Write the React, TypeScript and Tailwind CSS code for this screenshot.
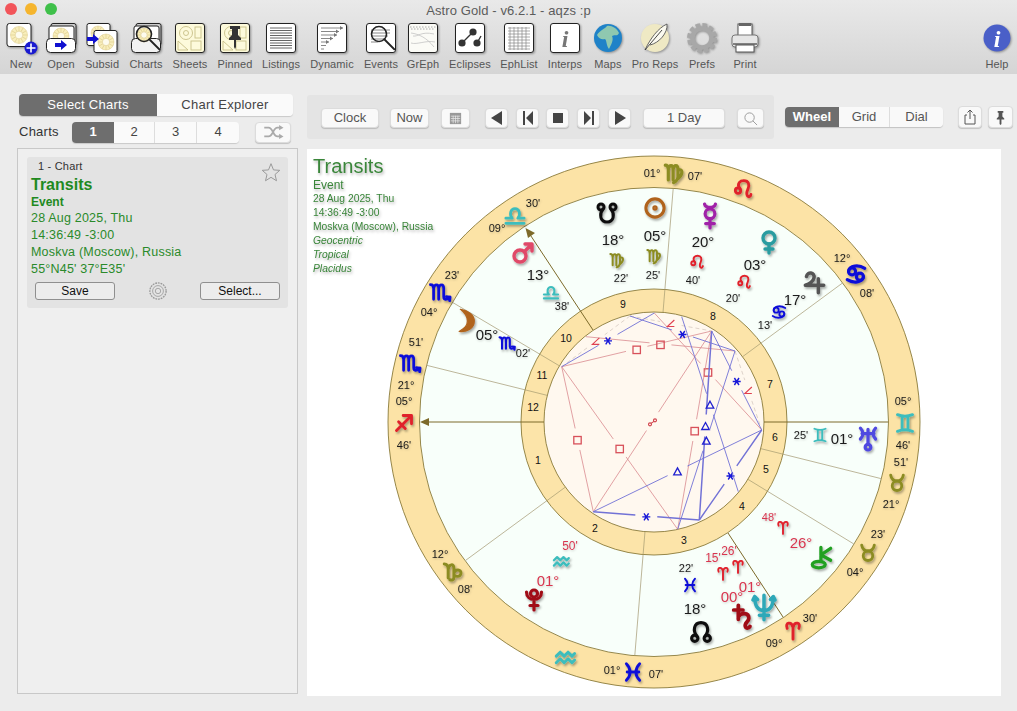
import { ReactNode } from 'react';

const CX = 654;
const CY = 422;

const C = {
  red: '#e0202c',
  rose: '#d8364f',
  blue: '#1010d8',
  teal: '#3dbdbd',
  olive: '#8c8c22',
  black: '#111111',
  brown: '#b0641e',
  line: '#8a7a3a',
};

// astro symbols, drawn in a 24x24 box
const GLYPHS: Record<string, ReactNode> = {
  aries: <path d="M5 10C2 3 10 1 12 9V23M12 9C14 1 22 3 19 10" />,
  taurus: (
    <>
      <circle cx="12" cy="15.5" r="6" />
      <path d="M4 2C5 8 9 9.5 12 9.5C15 9.5 19 8 20 2" />
    </>
  ),
  gemini: <path d="M3 2C9 4.5 15 4.5 21 2M3 22C9 19.5 15 19.5 21 22M8.5 4.5V19.5M15.5 4.5V19.5" />,
  cancer: (
    <>
      <circle cx="7.5" cy="9" r="4" />
      <circle cx="16.5" cy="15" r="4" />
      <path d="M3.5 9C4.5 2 15 1 22 5.5M20.5 15C19.5 22 9 23 2 18.5" />
    </>
  ),
  leo: (
    <>
      <circle cx="6" cy="14" r="3.2" />
      <path d="M8 11.5C4 5 9 2 13 2C19 2 20 7 18 12C16.5 15 15.5 18 17.5 20.5C19 22 21 21 21.5 18.5" />
    </>
  ),
  virgo: <path d="M2 3C4 3 5.5 5 5.5 8V20M5.5 8C6.5 2 11 2 11 8V20M11 8C12 2 16.5 2 16.5 8V16C16.5 19 14 22 11.5 23M16.5 9C22 6 23 13 16.5 18.5" />,
  libra: <path d="M2 21H22M2 15.5H9C5.5 12 7 5 12 5C17 5 18.5 12 15 15.5H22" />,
  scorpio: <path d="M1.5 4C3.5 4 5 5.5 5 8V20M5 8C6 3 10.5 3 10.5 8V20M10.5 8C11.5 3 16 3 16 8V17C16 20.5 19 21.5 23 17.5M23 17.5L19 17M23 17.5L22.5 21.5" />,
  sagittarius: <path d="M3 21L21 3M11 3H21V13M5.5 10.5L13.5 18.5" />,
  capricorn: <path d="M2 4C5 4 6.5 6.5 6.5 10V20M6.5 10C7.5 4 13 3 13 9V19C13 22 11 23 8.5 22M13 15C14 9 22 10 21 15C20 19 15 19 13 16" />,
  aquarius: <path d="M2 11L6.5 6.5L11 11L15.5 6.5L20 11L23 8M2 18.5L6.5 14L11 18.5L15.5 14L20 18.5L23 15.5" />,
  pisces: <path d="M4 2C10 8 10 16 4 22M20 2C14 8 14 16 20 22M5 12H19" />,
  sun: (
    <>
      <circle cx="12" cy="12" r="9.5" />
      <circle cx="12" cy="12" r="1.2" />
    </>
  ),
  moon: <path d="M8 2C15 3 20 7 20 12C20 18 14 22 7 21C12 18 14 16 14 12C14 8 12 5 8 2Z" fill="currentColor" strokeWidth="1" />,
  mercury: (
    <>
      <circle cx="12" cy="10" r="4.5" />
      <path d="M12 14.5V23M8 19H16M7 1C8 5 16 5 17 1" />
    </>
  ),
  venus: (
    <>
      <circle cx="12" cy="8" r="6" />
      <path d="M12 14V23M8 19H16" />
    </>
  ),
  mars: (
    <>
      <circle cx="9" cy="15" r="6" />
      <path d="M13.5 10.5L21 3M14 3H21V10" />
    </>
  ),
  jupiter: <path d="M5 7C6 2 13 3 12 8C11.5 11 8 14 4 15H21M16 9V22" />,
  saturn: <path d="M8 2V14M4 6H12M8 12C10 8 17 8 17 13C17 16 13 17 14 20C14.5 22 17 22 18 20" />,
  uranus: (
    <>
      <circle cx="12" cy="19.5" r="2.6" />
      <path d="M5 2C8 5 8 9 5 12M19 2C16 5 16 9 19 12M6.5 7H17.5M12 3V17" />
    </>
  ),
  neptune: <path d="M4 3C4 13 8 15 12 15C16 15 20 13 20 3M12 2V23M8 19H16M2.5 6L4 3L6.5 5.5M17.5 5.5L20 3L21.5 6" />,
  pluto: (
    <>
      <circle cx="12" cy="6.5" r="3.5" />
      <path d="M4.5 5C4.5 15 19.5 15 19.5 5M12 13V23M8 18.5H16" />
    </>
  ),
  chiron: (
    <>
      <ellipse cx="9" cy="19" rx="6" ry="3" />
      <path d="M11 16V3M11 10L20 4M11 10L20 15" />
    </>
  ),
  nnode: (
    <>
      <circle cx="6" cy="18" r="3" />
      <circle cx="18" cy="18" r="3" />
      <path d="M8 16C4 11 5 3 12 3C19 3 20 11 16 16" />
    </>
  ),
  snode: (
    <>
      <circle cx="6" cy="6" r="3" />
      <circle cx="18" cy="6" r="3" />
      <path d="M8 8C4 13 5 21 12 21C19 21 20 13 16 8" />
    </>
  ),
};

type Sym = [string, number, number, string, number, number?];

const SYMBOLS: Sym[] = [
  // signs on the outer ring
  ['libra', 515, 215, C.teal, 22, 3],
  ['scorpio', 440, 292, C.blue, 22, 3],
  ['scorpio', 410, 363, C.blue, 22, 3],
  ['sagittarius', 404, 423, C.red, 20, 3.4],
  ['capricorn', 453, 571, C.olive, 21, 3.4],
  ['aquarius', 565, 657, C.teal, 21, 3.4],
  ['pisces', 633, 672, C.blue, 20, 3.4],
  ['aries', 793, 630, C.red, 20, 3.4],
  ['taurus', 868, 553, C.olive, 19, 3.6],
  ['taurus', 897, 483, C.olive, 19, 3.6],
  ['gemini', 905, 423, C.teal, 20, 3.4],
  ['cancer', 856, 274, C.blue, 21, 3.6],
  ['leo', 743, 189, C.red, 20, 3.4],
  ['virgo', 674, 173, C.olive, 21, 3.6],
  // planets
  ['snode', 607, 213, C.black, 24, 3],
  ['sun', 655, 208, C.brown, 23, 3.2],
  ['mercury', 710, 216, '#a020a8', 26, 3],
  ['venus', 769, 242, '#2a9ca0', 24, 3.4],
  ['jupiter', 814, 282, '#555555', 26, 3.2],
  ['mars', 523, 253, '#e04868', 24, 3.4],
  ['moon', 465, 321, C.brown, 28],
  ['uranus', 868, 439, '#5048e0', 26, 3],
  ['chiron', 822, 557, '#20a020', 26, 3],
  ['neptune', 764, 607, '#2ea8b8', 28, 3],
  ['saturn', 743, 617, '#a00c18', 28, 3.2],
  ['nnode', 701, 632, C.black, 25, 3],
  ['pluto', 534, 599, '#a00c18', 24, 3.2],
  // small signs next to the planets
  ['virgo', 617, 260, C.olive, 16, 3],
  ['virgo', 654, 256, C.olive, 16, 3],
  ['leo', 697, 262, C.red, 15, 3],
  ['leo', 744, 282, C.red, 15, 3],
  ['cancer', 779, 312, C.blue, 15, 3],
  ['libra', 551, 292, C.teal, 17, 3],
  ['scorpio', 507, 343, C.blue, 17, 3],
  ['gemini', 820, 435, C.teal, 15, 3],
  ['aries', 783, 527, C.red, 15, 3],
  ['aries', 738, 566, C.red, 15, 3],
  ['aries', 723, 573, C.red, 15, 3],
  ['pisces', 690, 585, C.blue, 15, 3],
  ['aquarius', 561, 561, C.teal, 17, 3.2],
];

type Txt = [string, number, number, number?, string?];

const LABELS: Txt[] = [
  ['01°', 652, 173], ["07'", 695, 176], ["30'", 533, 203], ['09°', 497, 228],
  ["23'", 452, 275], ['04°', 429, 312], ["51'", 416, 342], ['21°', 406, 385],
  ['05°', 404, 401], ["46'", 404, 445], ['12°', 440, 554], ["08'", 465, 589],
  ['01°', 612, 670], ["07'", 656, 674], ['09°', 774, 643], ["30'", 810, 618],
  ['04°', 855, 572], ["23'", 878, 534], ['21°', 891, 504], ["51'", 901, 462],
  ["46'", 903, 445], ['05°', 903, 401], ['12°', 842, 258], ["08'", 867, 293],
  ['18°', 613, 239, 15], ["22'", 621, 278], ['05°', 655, 235, 15], ["25'", 653, 275],
  ['20°', 703, 241, 15], ["40'", 693, 280], ['03°', 755, 264, 15], ["20'", 733, 298],
  ['17°', 795, 299, 15], ["13'", 765, 325], ['13°', 538, 274, 15], ["38'", 562, 306],
  ['05°', 487, 334, 15], ["02'", 523, 353], ['01°', 842, 438, 15], ["25'", 801, 435],
  ['26°', 801, 542, 15, C.rose], ["48'", 769, 517, 11, C.rose],
  ['01°', 750, 586, 15, C.rose], ["26'", 729, 551, 12, C.rose],
  ['00°', 732, 596, 15, C.rose], ["15'", 713, 558, 12, C.rose],
  ['18°', 695, 608, 15], ["22'", 686, 568],
  ['01°', 548, 580, 15, C.rose], ["50'", 570, 546, 12, C.rose],
];

const HOUSES: [string, number, number][] = [
  ['9', 623, 304], ['8', 713, 316], ['7', 770, 384], ['6', 775, 437],
  ['5', 766, 469], ['4', 742, 506], ['3', 684, 540], ['2', 595, 528],
  ['1', 538, 460], ['12', 533, 407], ['11', 542, 375], ['10', 566, 338],
];

const CUSPS = [166, 149.3, 85.3, 36.4, -14, -31.4, -94.7, -143.7];

const P: Record<string, [number, number]> = {
  a: [561.7, 366.7], b: [630, 316], c: [654.3, 313], d: [711.7, 331], e: [735, 351],
  f: [761.7, 430], g: [738.3, 491.7], h: [699.3, 520], i: [677.7, 529.3], j: [593.3, 511.7],
  k: [586, 336.7], m: [681.7, 316.7],
};

const RED = '#d98a8f';
const BLUE = '#7272d6';

// from, to, kind, width
const ASPECTS: [string, string, string, number][] = [
  ['a', 'd', 'square', 0.8], ['k', 'e', 'square', 0.8], ['c', 'f', 'square', 0.8],
  ['d', 'i', 'square', 0.8], ['a', 'j', 'square', 0.8], ['a', 'i', 'square', 0.8],
  ['d', 'j', 'opp', 0.8], ['b', 'a', 'semi', 0.6], ['b', 'd', 'semi', 0.6], ['e', 'f', 'semi', 0.6],
  ['c', 'a', 'sextile', 0.9], ['b', 'e', 'sextile', 0.9], ['d', 'f', 'sextile', 0.9],
  ['f', 'h', 'sextile', 1.4], ['j', 'h', 'sextile', 1.4], ['j', 'f', 'trine', 0.9],
  ['h', 'd', 'trine', 1.5], ['i', 'e', 'trine', 0.9], ['m', 'g', 'trine', 0.9],
];

function Glyph({ name, x, y, color, size, sw = 3 }: { name: string; x: number; y: number; color: string; size: number; sw?: number }) {
  const s = size / 24;
  return (
    <g
      transform={`translate(${x - size / 2} ${y - size / 2}) scale(${s})`}
      fill="none"
      stroke={color}
      color={color}
      strokeWidth={sw}
      strokeLinecap="round"
      strokeLinejoin="round"
    >
      {GLYPHS[name]}
    </g>
  );
}

function pt(angle: number, r: number) {
  const t = (angle * Math.PI) / 180;
  return [CX + r * Math.cos(t), CY - r * Math.sin(t)];
}

function AspectMark({ kind, x, y }: { kind: string; x: number; y: number }) {
  if (kind === 'opp') {
    return (
      <g fill="none" stroke="#d0404a" strokeWidth="1.1">
        <circle cx={x - 2.5} cy={y + 2} r="1.5" />
        <circle cx={x + 2.5} cy={y - 2} r="1.5" />
        <path d={`M${x - 1.5} ${y + 1}L${x + 1.5} ${y - 1}`} />
      </g>
    );
  }
  if (kind === 'square') {
    return <rect x={x - 3.7} y={y - 3.7} width="7.4" height="7.4" fill="none" stroke="#d8505a" strokeWidth="1.3" />;
  }
  if (kind === 'semi') {
    return <path d={`M${x + 3.5} ${y - 4.5}L${x - 3.5} ${y + 2}H${x + 3.5}`} fill="none" stroke="#e04050" strokeWidth="1.1" />;
  }
  if (kind === 'trine') {
    return <path d={`M${x} ${y - 4}L${x + 3.8} ${y + 3}H${x - 3.8}Z`} fill="none" stroke="#2020d0" strokeWidth="1.3" />;
  }
  return (
    <path
      d={`M${x - 4} ${y}H${x + 4}M${x - 2.3} ${y - 3.5}L${x + 2.3} ${y + 3.5}M${x + 2.3} ${y - 3.5}L${x - 2.3} ${y + 3.5}`}
      stroke="#1818d8"
      strokeWidth="1.4"
    />
  );
}

function Wheel() {
  return (
    <svg viewBox="307 149 694 547" className="block h-[547px] w-[694px]">
      <defs>
        <filter id="sh" x="-30%" y="-30%" width="170%" height="170%">
          <feDropShadow dx="1.2" dy="1.8" stdDeviation="1.1" floodColor="#000" floodOpacity="0.35" />
        </filter>
        <filter id="tsh" x="-30%" y="-30%" width="170%" height="170%">
          <feDropShadow dx="0.6" dy="1" stdDeviation="0.8" floodColor="#000" floodOpacity="0.2" />
        </filter>
      </defs>

      <circle cx={CX} cy={CY} r="266" fill="#fce3a6" stroke={C.line} strokeWidth="0.9" />
      <circle cx={CX} cy={CY} r="234.5" fill="#f8fffa" stroke={C.line} strokeWidth="0.9" />
      {CUSPS.map((a) => {
        const [x1, y1] = pt(a, 110);
        const [x2, y2] = pt(a, 234);
        return <line key={a} x1={x1} y1={y1} x2={x2} y2={y2} stroke="#b5ae8e" strokeWidth="0.9" />;
      })}
      <circle cx={CX} cy={CY} r="133" fill="#fce3a6" fillOpacity="0.96" stroke={C.line} strokeWidth="0.9" />
      {CUSPS.map((a) => {
        const [x1, y1] = pt(a, 110);
        const [x2, y2] = pt(a, 133);
        return <line key={a} x1={x1} y1={y1} x2={x2} y2={y2} stroke="#b0a478" strokeWidth="0.8" />;
      })}
      <circle cx={CX} cy={CY} r="110" fill="#fff8ef" stroke={C.line} strokeWidth="0.9" />

      {/* asc / mc axes */}
      <path d="M428 422H544M764 422H888M527 230L593 330M728 533L783 617" stroke="#7d6a2a" strokeWidth="1" fill="none" />
      <path d="M420 422L429 418V426Z" fill="#7d6a2a" />
      <path d="M525.5 228L535 233L528 238Z" fill="#7d6a2a" />

      {ASPECTS.map(([from, to, kind, w], n) => {
        const [x1, y1] = P[from];
        const [x2, y2] = P[to];
        const mx = (x1 + x2) / 2;
        const my = (y1 + y2) / 2;
        const len = Math.hypot(x2 - x1, y2 - y1);
        const ux = (x2 - x1) / len;
        const uy = (y2 - y1) / len;
        const red = kind === 'square' || kind === 'opp' || kind === 'semi';
        const gap = 11;
        const stroke = kind === 'semi' ? '#c8b8b0' : red ? RED : BLUE;
        return (
          <g key={n}>
            <path
              d={`M${x1} ${y1}L${mx - ux * gap} ${my - uy * gap}M${mx + ux * gap} ${my + uy * gap}L${x2} ${y2}`}
              stroke={stroke}
              strokeWidth={w}
              strokeDasharray={kind === 'semi' ? '4 3' : undefined}
              fill="none"
            />
            <AspectMark kind={kind} x={mx} y={my + 1} />
          </g>
        );
      })}

      <g fontFamily="'Liberation Sans', sans-serif" textAnchor="middle" dominantBaseline="central">
        {HOUSES.map(([t, x, y]) => (
          <text key={t} x={x} y={y} fontSize="10.5" fill="#111">
            {t}
          </text>
        ))}
        <g filter="url(#tsh)">
          {LABELS.map(([t, x, y, size = 11, color = '#1a1a1a'], n) => (
            <text key={n} x={x} y={y} fontSize={size} fill={color}>
              {t}
            </text>
          ))}
        </g>
      </g>

      <g filter="url(#sh)">
        {SYMBOLS.map(([name, x, y, color, size, sw], n) => (
          <Glyph key={n} name={name} x={x} y={y} color={color} size={size} sw={sw} />
        ))}
      </g>
    </svg>
  );
}

const TILE = { fill: '#ffffff', stroke: '#222', strokeWidth: 1 };

function Tile({ fill = '#ffffff' }: { fill?: string }) {
  return <rect x="2.5" y="2.5" width="29" height="29" rx="2.5" {...TILE} fill={fill} />;
}

function MiniWheel({ x, y, r }: { x: number; y: number; r: number }) {
  return (
    <g>
      <circle cx={x} cy={y} r={r} fill="#f8eebb" stroke="#dccb8c" strokeWidth="0.5" />
      <circle cx={x} cy={y} r={r * 0.45} fill="#fdfbee" stroke="#dccb8c" strokeWidth="0.5" />
      {[0, 30, 60, 90, 120, 150].map((a) => (
        <path
          key={a}
          transform={`rotate(${a} ${x} ${y})`}
          d={`M${x - r} ${y}H${x - r * 0.45}M${x + r * 0.45} ${y}H${x + r}`}
          stroke="#dccb8c"
          strokeWidth="0.6"
        />
      ))}
    </g>
  );
}

function Lens({ x, y, r, len = 11, fill = 'none' }: { x: number; y: number; r: number; len?: number; fill?: string }) {
  const d = r * 0.7;
  return (
    <g fill={fill} stroke="#222" strokeLinecap="round">
      <circle cx={x} cy={y} r={r} strokeWidth="1.6" />
      <path d={`M${x + d} ${y + d}L${x + d + len} ${y + d + len}`} strokeWidth="1.8" />
    </g>
  );
}

function Sheet() {
  return (
    <g fill="none" stroke="#c8c088" strokeWidth="0.9">
      <circle cx="13" cy="12" r="6.5" />
      <circle cx="13" cy="12" r="2.5" />
      <rect x="22" y="6" width="6" height="11" />
      <path d="M5 20L15 29H5Z" />
      <rect x="18" y="20" width="10" height="9" />
    </g>
  );
}

function BlueArrow({ x, y }: { x: number; y: number }) {
  return <path d={`M${x} ${y - 2}H${x + 6}V${y - 5}L${x + 12} ${y}L${x + 6} ${y + 5}V${y + 2}H${x}Z`} fill="#1010d0" />;
}

const I = 'drop-shadow-[1px_1px_1px_rgba(0,0,0,0.35)]';

const TOOLS: { label: string; w: number; icon: ReactNode }[] = [
  {
    label: 'New',
    w: 42,
    icon: (
      <>
        <rect x="3" y="2.5" width="24" height="23" rx="2.5" {...TILE} />
        <MiniWheel x={15} y={14} r={8.5} />
        <circle cx="27" cy="27" r="6.5" fill="#1a1ad0" />
        <path d="M27 22.5V31.5M22.5 27H31.5" stroke="#fff" strokeWidth="1.6" />
      </>
    ),
  },
  {
    label: 'Open',
    w: 38,
    icon: (
      <>
        <rect x="7" y="2.5" width="25" height="22" rx="2" fill="#ccc" stroke="#222" />
        <rect x="5" y="5" width="25" height="20" rx="2" {...TILE} />
        <MiniWheel x={17} y={15} r={8} />
        <rect x="2.5" y="17.5" width="29" height="14" rx="4" {...TILE} />
        <BlueArrow x={11} y={24} />
      </>
    ),
  },
  {
    label: 'Subsid',
    w: 44,
    icon: (
      <>
        <rect x="2" y="2.5" width="23" height="22" rx="2" {...TILE} />
        <MiniWheel x={13} y={12} r={7} />
        <rect x="9" y="9.5" width="23" height="22" rx="2" {...TILE} />
        <MiniWheel x={21} y={21} r={8} />
        <BlueArrow x={2} y={18} />
      </>
    ),
  },
  {
    label: 'Charts',
    w: 44,
    icon: (
      <>
        <rect x="7" y="2.5" width="25" height="22" rx="2" fill="#ccc" stroke="#222" />
        <rect x="5" y="5" width="25" height="20" rx="2" {...TILE} />
        <rect x="2.5" y="17.5" width="29" height="14" rx="4" fill="#f2f2f2" stroke="#222" />
        <MiniWheel x={15} y={14} r={7} />
        <Lens x={15} y={13} r={7.5} len={10} />
      </>
    ),
  },
  {
    label: 'Sheets',
    w: 44,
    icon: (
      <>
        <Tile fill="#fdfadb" />
        <Sheet />
      </>
    ),
  },
  {
    label: 'Pinned',
    w: 46,
    icon: (
      <>
        <Tile fill="#fdfadb" />
        <Sheet />
        <path d="M12 5H22V8H20V14L23 17V19H18V26L17 28L16 26V19H11V17L14 14V8H12Z" fill="#333" />
      </>
    ),
  },
  {
    label: 'Listings',
    w: 46,
    icon: (
      <>
        <Tile />
        <path d="M6 7H28M6 9.5H28M6 12H28M6 14.5H28M6 17H28M6 19.5H28M6 22H28M6 24.5H28M6 27H28" stroke="#666" strokeWidth="1" />
      </>
    ),
  },
  {
    label: 'Dynamic',
    w: 56,
    icon: (
      <>
        <Tile />
        <path d="M6 7H28M6 10.5H24M6 14H22M6 17.5H18M6 21H14M6 24.5H11M6 28H9" stroke="#888" strokeWidth="1.2" />
        <path d="M25 5L28 7L25 9ZM21 8.5L24 10.5L21 12.5ZM19 12L22 14L19 16ZM15 15.5L18 17.5L15 19.5ZM11 19L14 21L11 23Z" fill="#777" />
      </>
    ),
  },
  {
    label: 'Events',
    w: 42,
    icon: (
      <>
        <Tile />
        <path d="M7 9H26M7 12H26M7 15H24M7 18H22M7 21H14" stroke="#888" strokeWidth="1" />
        <Lens x={15} y={13} r={7.5} len={10} />
      </>
    ),
  },
  {
    label: 'GrEph',
    w: 42,
    icon: (
      <>
        <Tile fill="#fbfbf6" />
        <path d="M4 6H30M5 8H29" stroke="#999" strokeWidth="0.8" strokeDasharray="1.5 1.5" />
        <path d="M5 12C13 13 21 17 28 26M5 22C11 24 20 19 29 21M7 15C12 16 15 10 28 13" stroke="#bbb" strokeWidth="0.7" fill="none" />
      </>
    ),
  },
  {
    label: 'Eclipses',
    w: 52,
    icon: (
      <>
        <Tile />
        <path d="M9 22L20 11M24 22L28 15" stroke="#333" strokeWidth="1.4" />
        <circle cx="9" cy="22" r="3.6" fill="#333" />
        <circle cx="20" cy="11" r="3.6" fill="#333" />
        <circle cx="24" cy="22" r="3.6" fill="#333" />
      </>
    ),
  },
  {
    label: 'EphList',
    w: 46,
    icon: (
      <>
        <Tile />
        <path
          d="M6 7H28M6 10H28M6 13H28M6 16H28M6 19H28M6 22H28M6 25H28M6 28H28M8 6V29M12 6V29M16 6V29M20 6V29M24 6V29"
          stroke="#888"
          strokeWidth="0.7"
        />
      </>
    ),
  },
  {
    label: 'Interps',
    w: 46,
    icon: (
      <>
        <Tile />
        <text x="17" y="26" textAnchor="middle" fontSize="24" fontStyle="italic" fontWeight="bold" fontFamily="'Liberation Serif', serif" fill="#777">
          i
        </text>
      </>
    ),
  },
  {
    label: 'Maps',
    w: 40,
    icon: (
      <>
        <circle cx="17" cy="17" r="14" fill="#1f82c8" />
        <path d="M6 14C9 9 14 8 16 5C20 4 26 7 28 12C26 16 24 13 21 15C23 19 20 24 18 28C15 24 16 20 14 18C11 19 8 18 6 14Z" fill="#8fc8b0" />
      </>
    ),
  },
  {
    label: 'Pro Reps',
    w: 54,
    icon: (
      <>
        <circle cx="17" cy="17" r="14" fill="#efe9c4" />
        <path d="M7 29C12 18 20 7 29 3C30 12 21 22 12 24" fill="#fbfaf0" stroke="#555" strokeWidth="0.9" />
        <path d="M7 29L24 9" stroke="#333" strokeWidth="0.9" />
      </>
    ),
  },
  {
    label: 'Prefs',
    w: 40,
    icon: (
      <>
        <circle cx="17" cy="17" r="13" fill="none" stroke="#a8a8a8" strokeWidth="4" strokeDasharray="4.5 2.3" />
        <circle cx="17" cy="17" r="9.5" fill="none" stroke="#a8a8a8" strokeWidth="4.5" />
      </>
    ),
  },
  {
    label: 'Print',
    w: 46,
    icon: (
      <>
        <rect x="10" y="3" width="14" height="13" fill="#fff" stroke="#555" />
        <rect x="11" y="2" width="12" height="3" fill="#666" />
        <rect x="4" y="14" width="26" height="12" rx="3" fill="#e6e6e6" stroke="#777" />
        <rect x="8" y="24" width="18" height="7" fill="#fff" stroke="#555" />
        <path d="M5 23H29" stroke="#555" strokeWidth="1.4" />
      </>
    ),
  },
];

function ToolItem({ label, w, icon }: { label: string; w: number; icon: ReactNode }) {
  return (
    <div className="flex flex-col items-center" style={{ width: w }}>
      <svg viewBox="0 0 34 34" className={`h-[34px] w-[34px] overflow-visible ${I}`}>
        {icon}
      </svg>
      <span className="mt-[2px] text-[11px] leading-[14px] tracking-[0.1px] whitespace-nowrap text-[#555]">{label}</span>
    </div>
  );
}

const BTN = 'flex h-[20px] items-center justify-center rounded-[4px] border border-[#dcdcdc] bg-[#f9f9f9] shadow-[0_1px_1px_rgba(0,0,0,0.18)]';

function Tri({ d }: { d: string }) {
  return (
    <svg viewBox="0 0 16 16" className="h-[16px] w-[16px]">
      <path d={d} fill="#444" />
    </svg>
  );
}

export default function App() {
  return (
    <div className="h-[711px] w-[1017px] overflow-hidden bg-[#ececec] font-['Liberation_Sans',sans-serif]">
      <header className="h-[74px] bg-gradient-to-b from-[#e9e9e9] to-[#d5d5d5]">
        <div className="relative flex h-[21px] items-center justify-center">
          <div className="absolute top-[3px] left-[5px] flex gap-[8px]">
            <span className="h-[12px] w-[12px] rounded-full bg-[#f2555a]" />
            <span className="h-[12px] w-[12px] rounded-full bg-[#f5b52e]" />
            <span className="h-[12px] w-[12px] rounded-full bg-[#3fc04a]" />
          </div>
          <span className="text-[13px] tracking-[0.1px] text-[#5c5c5c]">Astro Gold - v6.2.1 - aqzs :p</span>
        </div>
        <div className="flex">
          {TOOLS.map((t) => (
            <ToolItem key={t.label} {...t} />
          ))}
          <div className="ml-auto">
            <ToolItem
              label="Help"
              w={40}
              icon={
                <>
                  <circle cx="17" cy="17" r="13.5" fill="#4a5fc8" />
                  <text x="17" y="26" textAnchor="middle" fontSize="24" fontStyle="italic" fontWeight="bold" fontFamily="'Liberation Serif', serif" fill="#fff">
                    i
                  </text>
                </>
              }
            />
          </div>
        </div>
      </header>

      <main className="flex">
        <aside className="w-[307px] pt-[20px] pl-[17px]">
          <div className="ml-[2px] flex h-[22px] w-[274px] overflow-hidden rounded-[4px] text-[13px] tracking-[0.25px] shadow-[0_1px_1px_rgba(0,0,0,0.15)]">
            <div className="flex w-[138px] items-center justify-center bg-[#6e6e6e] text-white">Select Charts</div>
            <div className="flex flex-1 items-center justify-center bg-[#fafafa] text-[#444]">Chart Explorer</div>
          </div>
          <div className="mt-[5px] flex h-[22px] items-center">
            <span className="ml-[2px] w-[53px] text-[13px] tracking-[0.25px] text-[#333]">Charts</span>
            <div className="flex h-[21px] w-[167px] overflow-hidden rounded-[4px] text-[13px] text-[#444] shadow-[0_1px_1px_rgba(0,0,0,0.15)]">
              <div className="flex w-[42px] items-center justify-center bg-[#6e6e6e] font-bold text-white">1</div>
              <div className="flex w-[41px] items-center justify-center border-r border-[#ddd] bg-[#fafafa]">2</div>
              <div className="flex w-[42px] items-center justify-center border-r border-[#ddd] bg-[#fafafa]">3</div>
              <div className="flex w-[42px] items-center justify-center bg-[#fafafa]">4</div>
            </div>
            <div className={`${BTN} ml-[16px] h-[21px] w-[36px]`}>
              <svg viewBox="0 0 24 16" className="h-[14px] w-[22px]" fill="none" stroke="#aaa" strokeWidth="2">
                <path d="M2 3H7C12 3 12 13 17 13H20M2 13H7C12 13 12 3 17 3H20" />
                <path d="M19 0L24 3L19 6ZM19 10L24 13L19 16Z" fill="#aaa" stroke="none" />
              </svg>
            </div>
          </div>
          <div className="mt-[5px] h-[546px] w-[281px] border border-[#c8c8c8] bg-[#efefef] pt-[8px] pl-[9px]">
            <div className="relative h-[151px] w-[261px] rounded-[3px] bg-[#e3e3e3] px-[4px] pt-[3px]">
              <div className="pl-[7px] text-[11px] leading-[12px] tracking-[0.2px] text-[#333]">1 - Chart</div>
              <div className="mt-[3px] text-[16px] leading-[20px] font-bold text-[#1f8a1f]">Transits</div>
              <div className="text-[12px] leading-[14px] font-bold text-[#1f8a1f]">Event</div>
              <div className="mt-[1px] text-[12.5px] leading-[17px] tracking-[0.2px] text-[#2a8a2a]">
                <div>28 Aug 2025, Thu</div>
                <div>14:36:49 -3:00</div>
                <div>Moskva (Moscow), Russia</div>
                <div>55°N45' 37°E35'</div>
              </div>
              <svg viewBox="0 0 24 24" className="absolute top-[5px] right-[7px] h-[20px] w-[20px]" fill="none" stroke="#9a9a9a" strokeWidth="1.2">
                <path d="M12 2L15 9.5L22.5 10L16.8 15L18.6 22.5L12 18.4L5.4 22.5L7.2 15L1.5 10L9 9.5Z" />
              </svg>
              <div className="mt-[4px] flex items-center justify-between px-[4px] text-[12px] text-[#111]">
                <div className="flex h-[18px] w-[80px] items-center justify-center rounded-[3px] border border-[#8f8f8f] bg-[#ececec]">Save</div>
                <svg viewBox="0 0 20 20" className="h-[18px] w-[18px]" fill="none" stroke="#999" strokeWidth="0.9">
                  <circle cx="10" cy="10" r="9" strokeDasharray="2 1" strokeWidth="1.5" />
                  <circle cx="10" cy="10" r="6" />
                  <circle cx="10" cy="10" r="3" />
                </svg>
                <div className="flex h-[18px] w-[80px] items-center justify-center rounded-[3px] border border-[#8f8f8f] bg-[#ececec]">Select...</div>
              </div>
            </div>
          </div>
        </aside>

        <section className="pt-[21px]">
          <div className="flex h-[44px] items-center">
            <div className="flex h-[44px] w-[467px] items-center rounded-[3px] bg-[#e4e4e4] pt-[2px] pl-[14px] text-[13px] text-[#555]">
              <div className={`${BTN} w-[58px]`}>Clock</div>
              <div className={`${BTN} ml-[11px] w-[39px]`}>Now</div>
              <div className={`${BTN} ml-[12px] w-[29px]`}>
                <svg viewBox="0 0 16 16" className="h-[15px] w-[15px]" fill="#999">
                  <path d="M2 2H14V14H2Z" />
                  <path d="M3 5.5H13M3 8H13M3 10.5H13M5.5 5V13M8 5V13M10.5 5V13" stroke="#eee" strokeWidth="0.7" />
                </svg>
              </div>
              <div className={`${BTN} ml-[15px] w-[23px]`}>
                <Tri d="M13 1V15L2 8Z" />
              </div>
              <div className={`${BTN} ml-[8px] w-[23px]`}>
                <Tri d="M13 1V15L6 8ZM3 1H5V15H3Z" />
              </div>
              <div className={`${BTN} ml-[7px] w-[23px]`}>
                <Tri d="M3 3H13V13H3Z" />
              </div>
              <div className={`${BTN} ml-[8px] w-[23px]`}>
                <Tri d="M3 1V15L10 8ZM11 1H13V15H11Z" />
              </div>
              <div className={`${BTN} ml-[8px] w-[23px]`}>
                <Tri d="M3 1V15L14 8Z" />
              </div>
              <div className={`${BTN} ml-[12px] w-[82px]`}>1 Day</div>
              <div className={`${BTN} ml-[12px] w-[27px]`}>
                <svg viewBox="0 0 16 16" className="h-[15px] w-[15px]" fill="none" stroke="#999" strokeWidth="1">
                  <circle cx="7" cy="7" r="5" />
                  <path d="M10.5 10.5L15 15" />
                </svg>
              </div>
            </div>
            <div className="ml-[11px] flex h-[20px] w-[158px] overflow-hidden rounded-[4px] text-[13px] text-[#555] shadow-[0_1px_1px_rgba(0,0,0,0.18)]">
              <div className="flex w-[54px] items-center justify-center bg-[#6e6e6e] font-bold text-white">Wheel</div>
              <div className="flex w-[51px] items-center justify-center border-r border-[#ddd] bg-[#f9f9f9]">Grid</div>
              <div className="flex flex-1 items-center justify-center bg-[#f9f9f9]">Dial</div>
            </div>
            <div className={`${BTN} ml-[15px] h-[22px] w-[24px]`}>
              <svg viewBox="0 0 16 16" className="h-[16px] w-[16px]" fill="none" stroke="#555" strokeWidth="1">
                <path d="M5 6H3V15H13V6H11M8 10V1M5.5 3.5L8 1L10.5 3.5" />
              </svg>
            </div>
            <div className={`${BTN} ml-[6px] h-[22px] w-[25px]`}>
              <svg viewBox="0 0 16 16" className="h-[15px] w-[15px]" fill="#555">
                <path d="M5 1H11V3H10V7L12 9V10H9V15L8 16L7 15V10H4V9L6 7V3H5Z" />
              </svg>
            </div>
          </div>
          <div className="relative mt-[10px] h-[547px] w-[694px] bg-white">
            <Wheel />
            <div className="absolute top-[6px] left-[6px] text-[10.3px] leading-[14px] text-[#3a863a] [text-shadow:1px_2px_3px_rgba(0,0,0,0.3)]">
              <div className="text-[20px] leading-[23px]">Transits</div>
              <div className="text-[12px] leading-[14px]">Event</div>
              <div>28 Aug 2025, Thu</div>
              <div>14:36:49 -3:00</div>
              <div>Moskva (Moscow), Russia</div>
              <div className="italic">Geocentric</div>
              <div className="italic">Tropical</div>
              <div className="italic">Placidus</div>
            </div>
          </div>
        </section>
      </main>
    </div>
  );
}
